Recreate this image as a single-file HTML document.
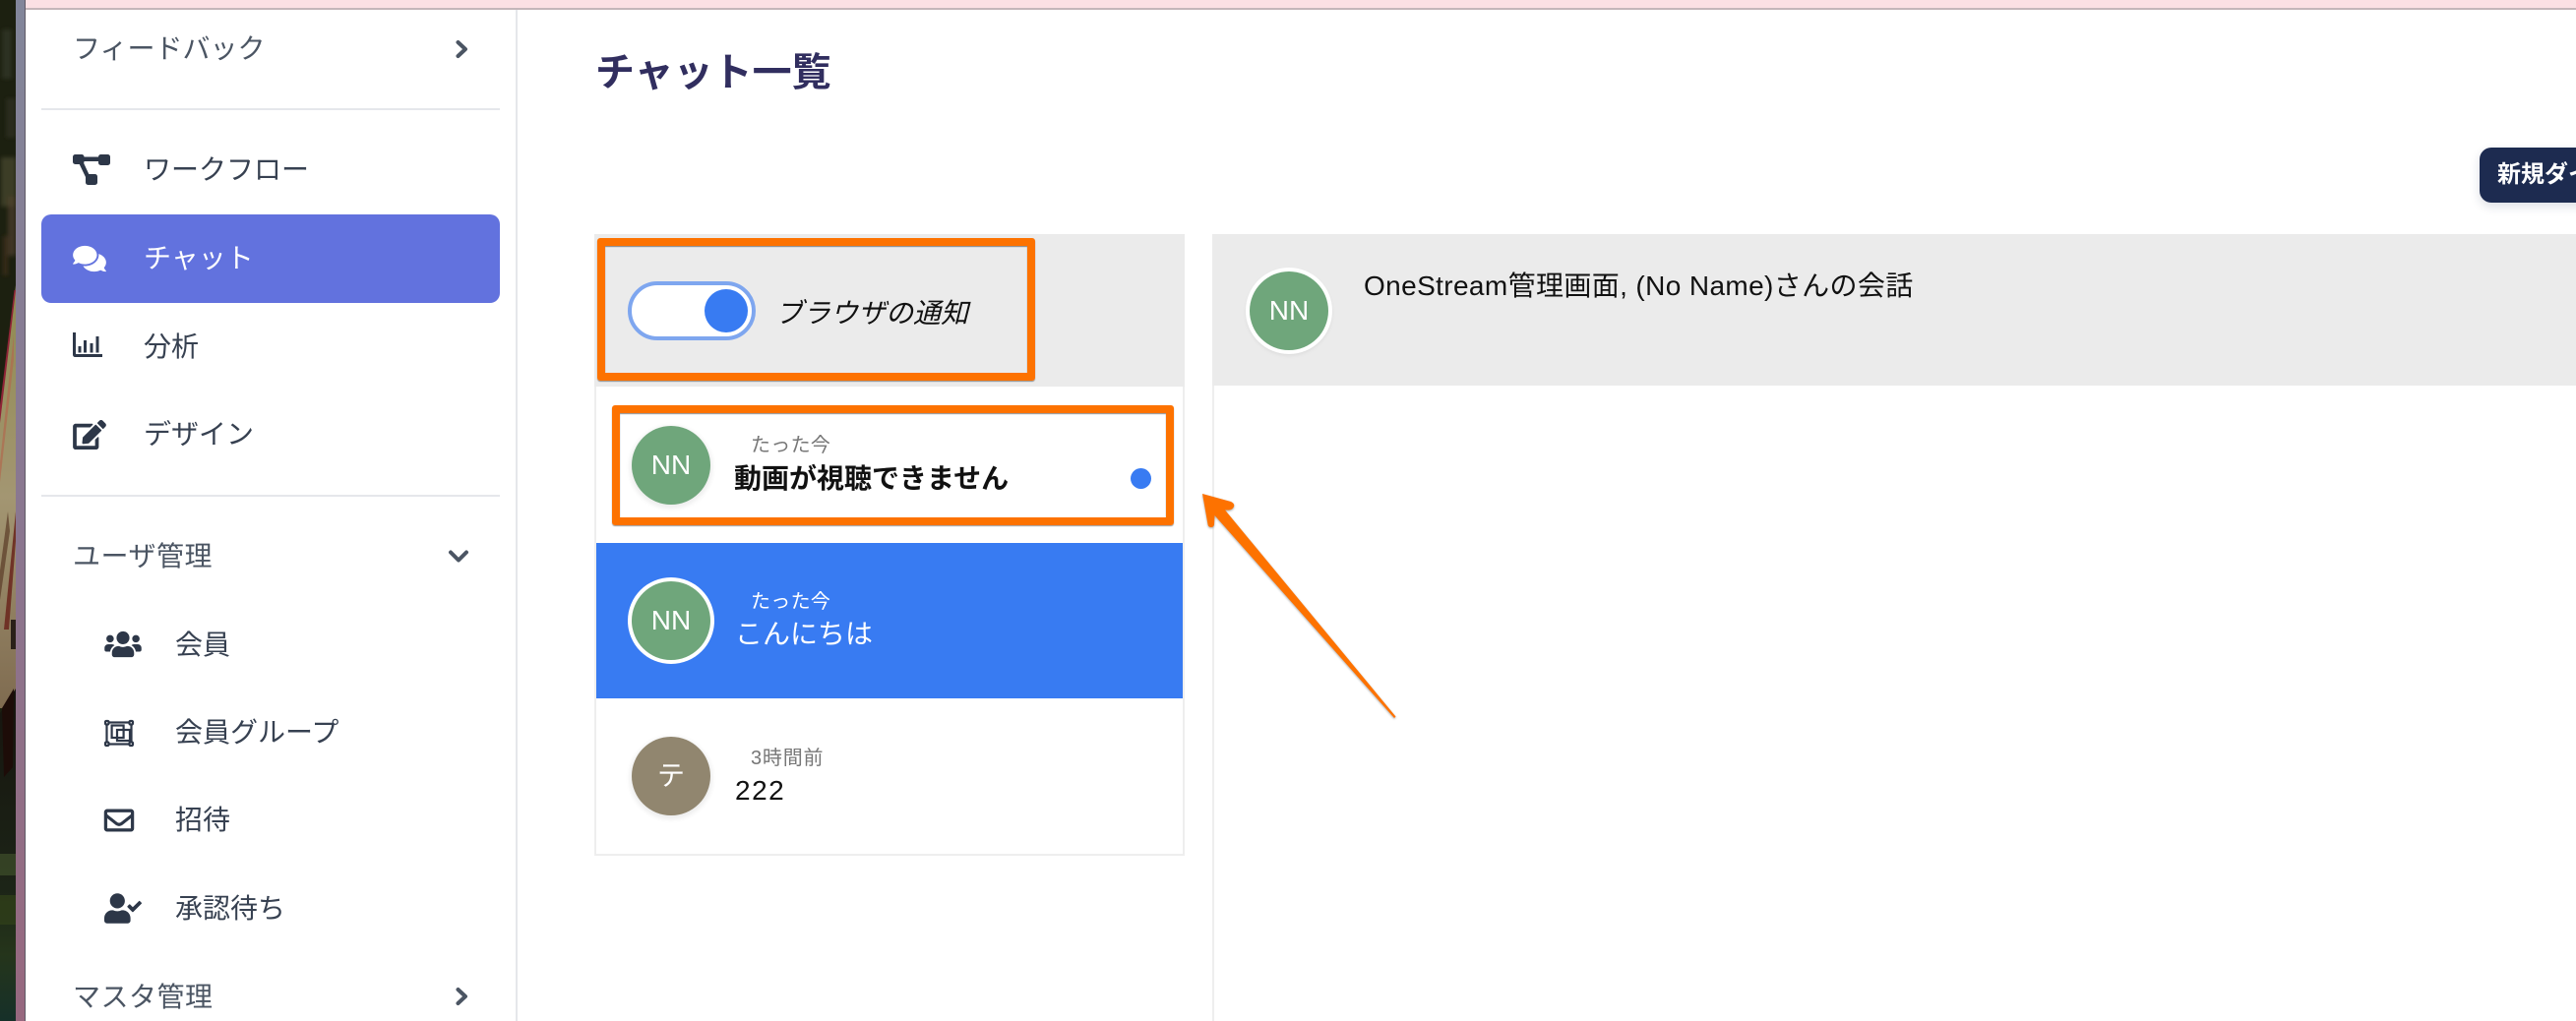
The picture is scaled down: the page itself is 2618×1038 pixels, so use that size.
<!DOCTYPE html>
<html lang="ja">
<head>
<meta charset="utf-8">
<title>チャット一覧</title>
<style>
html,body{margin:0;padding:0;width:2618px;height:1038px;overflow:hidden;background:#fff}
body{position:relative;font-family:"Liberation Sans","Noto Sans CJK JP",sans-serif;color:#111}
.a{position:absolute}
.t{position:absolute;white-space:nowrap;line-height:42px;height:42px;font-size:28px}
.g{color:#4b5563}
.i{color:#374151}
svg.ic{position:absolute;fill:#2d3748;overflow:visible}
svg.ch{position:absolute;fill:none;stroke:#4b5563;stroke-width:4;stroke-linecap:round;stroke-linejoin:round;overflow:visible}
.av{position:absolute;width:80px;height:80px;border-radius:50%;color:#fff;font-size:28px;line-height:80px;text-align:center}
.box{position:absolute;box-sizing:border-box;border:8px solid #fd7200;border-radius:3px;box-shadow:0 1px 1px rgba(0,0,0,.4),inset 0 1px 1px rgba(0,0,0,.45)}
</style>
</head>
<body>
<!-- left desktop strip -->
<svg class="a" style="left:0;top:0" width="26" height="1038" viewBox="0 0 26 1038">
<defs>
<linearGradient id="pg" x1="0" y1="0" x2="0" y2="1"><stop offset="0" stop-color="#82869a"/><stop offset=".5" stop-color="#8a7790"/><stop offset="1" stop-color="#97687f"/></linearGradient>
<linearGradient id="tan" x1="0" y1="0" x2="0" y2="1"><stop offset="0" stop-color="#8f8a50"/><stop offset=".5" stop-color="#a39672"/><stop offset="1" stop-color="#7f6b50"/></linearGradient>
<linearGradient id="dk" x1="0" y1="0" x2="0" y2="1"><stop offset="0" stop-color="#16140e"/><stop offset=".6" stop-color="#1c2417"/><stop offset=".8" stop-color="#25351b"/><stop offset="1" stop-color="#163029"/></linearGradient>
<filter id="bl"><feGaussianBlur stdDeviation="2"/></filter>
</defs>
<rect width="16" height="1038" fill="#1c2010"/>
<g filter="url(#bl)">
<rect y="30" x="2" width="10" height="50" fill="#34382a" opacity=".7"/>
<rect y="100" x="6" width="10" height="40" fill="#33332a" opacity=".6"/>
<rect y="160" x="1" width="15" height="50" fill="#45452c" opacity=".8"/>
<rect y="200" x="8" width="8" height="60" fill="#50402c" opacity=".7"/>
<rect y="240" x="3" width="5" height="40" fill="#443020" opacity=".7"/>
</g>
<polygon points="16,290 16,720 0,720 0,425" fill="url(#tan)"/>
<polygon points="16,295 14.500,295 0,412 0,430" fill="#8f2336"/>
<polygon points="14,340 0,470 0,490 14,365" fill="#b0694e" opacity=".7"/>
<polygon points="16,520 4,640 9,640 16,550" fill="#6c2a20" opacity=".9"/>
<polygon points="8,520 0,580 0,610 10,540" fill="#5a3a26" opacity=".7"/>
<rect y="630" x="11" width="5" height="30" fill="#2a2018"/>
<polygon points="0,725 16,700 16,1038 0,1038" fill="url(#dk)"/>
<polygon points="2,720 14,700 13,780 4,790" fill="#1d0c08"/>
<rect y="868" x="0" width="16" height="22" fill="#3b4a28" opacity=".8"/>
<rect y="910" x="0" width="16" height="30" fill="#303f19" opacity=".8"/>
<rect x="16" width="10" height="1038" fill="url(#pg)"/>
<rect x="25" width="1" height="1038" fill="#5f5a66"/>
</svg>

<!-- top pink bar -->
<div class="a" style="left:26px;top:0;width:2592px;height:8px;background:#fbe0e4"></div>
<div class="a" style="left:26px;top:8px;width:2592px;height:2px;background:#c4b6ba"></div>

<!-- sidebar -->
<div class="a" style="left:524px;top:10px;width:2px;height:1028px;background:#e5e7eb"></div>
<div class="a" style="left:42px;top:110px;width:466px;height:2px;background:#e5e7eb"></div>
<div class="a" style="left:42px;top:503px;width:466px;height:2px;background:#e5e7eb"></div>
<div class="a" style="left:42px;top:218px;width:466px;height:90px;background:#6272de;border-radius:10px"></div>

<span class="t g" style="left:74px;top:29px">フィードバック</span>
<svg class="ch" style="left:463px;top:41px" width="12" height="18" viewBox="0 0 12 18"><path d="M2.500 2L10 9L2.500 16"/></svg>

<svg class="ic" style="left:74px;top:157px" width="38" height="31" viewBox="0 0 38 31">
<rect x="0" y="0" width="11.500" height="10" rx="2.500"/><rect x="26" y="0" width="12" height="11" rx="2.500"/><rect x="13" y="20" width="12" height="11" rx="2.500"/>
<path d="M10 2.500H27V7H10zM6 8.500L10 6.500L17 21.500L13 23z"/>
</svg>
<span class="t i" style="left:146px;top:152px">ワークフロー</span>

<svg class="ic" style="left:74px;top:248px;fill:#fff" width="34" height="30" viewBox="0 0 576 512"><path d="M416 192c0-88.400-93.100-160-208-160S0 103.600 0 192c0 34.300 14.100 65.900 38 92-13.400 30.200-35.500 54.200-35.800 54.500-2.200 2.300-2.800 5.700-1.500 8.700S4.800 352 8 352c36.600 0 66.900-12.300 88.700-25 32.200 15.700 70.300 25 111.300 25 114.900 0 208-71.600 208-160zm122 220c23.900-26 38-57.700 38-92 0-66.900-53.500-124.200-129.300-148.100.9 6.600 1.300 13.300 1.300 20.100 0 105.900-107.700 192-240 192-10.800 0-21.300-.8-31.700-1.900C207.800 439.600 281.800 480 368 480c41 0 79.100-9.200 111.300-25 21.800 12.700 52.100 25 88.700 25 3.200 0 6.100-1.900 7.300-4.800 1.300-2.900.7-6.300-1.500-8.700-.3-.3-22.400-24.200-35.800-54.500z"/></svg>
<span class="t" style="left:146px;top:242px;color:#fff">チャット</span>

<svg class="ic" style="left:74px;top:338px" width="30" height="26" viewBox="0 0 30 26">
<path d="M0 0H3V22H30V25H2.500C1 25 0 24 0 22.500z"/>
<rect x="5.500" y="14" width="3" height="6.500"/><rect x="11" y="8" width="3" height="12.500"/><rect x="17.500" y="11" width="3" height="9.500"/><rect x="23.500" y="4" width="3" height="16.500"/>
</svg>
<span class="t i" style="left:146px;top:332px">分析</span>

<svg class="ic" style="left:74px;top:427px" width="34" height="30" viewBox="0 0 576 512"><path d="M402.600 83.200l90.200 90.200c3.800 3.800 3.800 10 0 13.800L274.400 405.600l-92.800 10.300c-12.400 1.400-22.900-9.100-21.500-21.500l10.300-92.800L388.800 83.200c3.800-3.800 10-3.800 13.800 0zm162-22.900l-48.800-48.800c-15.200-15.200-39.900-15.200-55.200 0l-35.400 35.400c-3.800 3.800-3.800 10 0 13.800l90.200 90.200c3.800 3.800 10 3.800 13.800 0l35.400-35.400c15.200-15.300 15.200-40 0-55.200zM384 346.200V448H64V128h229.800c3.200 0 6.200-1.300 8.500-3.500l40-40c7.600-7.600 2.200-20.500-8.500-20.500H48C21.500 64 0 85.500 0 112v352c0 26.500 21.500 48 48 48h352c26.500 0 48-21.500 48-48V306.200c0-10.700-12.900-16-20.500-8.500l-40 40c-2.200 2.300-3.500 5.300-3.500 8.500z"/></svg>
<span class="t i" style="left:146px;top:421px">デザイン</span>

<span class="t g" style="left:74px;top:545px;letter-spacing:.5px">ユーザ管理</span>
<svg class="ch" style="left:456px;top:559px" width="20" height="13" viewBox="0 0 20 13"><path d="M2 2.500L10 10.500L18 2.500"/></svg>

<svg class="ic" style="left:106px;top:640px" width="38" height="30" viewBox="0 0 640 512"><path d="M96 224c35.300 0 64-28.700 64-64s-28.700-64-64-64-64 28.700-64 64 28.700 64 64 64zm448 0c35.300 0 64-28.700 64-64s-28.700-64-64-64-64 28.700-64 64 28.700 64 64 64zm32 32h-64c-17.600 0-33.500 7.100-45.100 18.600 40.300 22.100 68.900 62 75.100 109.400h66c17.700 0 32-14.300 32-32v-32c0-35.300-28.700-64-64-64zm-256 0c61.900 0 112-50.100 112-112S381.900 32 320 32 208 82.100 208 144s50.100 112 112 112zm76.800 32h-8.300c-20.800 10-43.900 16-68.500 16s-47.600-6-68.500-16h-8.300C179.600 288 128 339.600 128 403.200V432c0 26.500 21.500 48 48 48h288c26.500 0 48-21.500 48-48v-28.800c0-63.600-51.600-115.200-115.200-115.200zm-223.700-13.400C161.500 263.100 145.600 256 128 256H64c-35.300 0-64 28.700-64 64v32c0 17.700 14.300 32 32 32h65.900c6.300-47.400 34.900-87.300 75.200-109.400z"/></svg>
<span class="t i" style="left:178px;top:635px">会員</span>

<svg class="ic" style="left:106px;top:732px;fill:none;stroke:#2d3748;stroke-width:2.200" width="30" height="27" viewBox="0 0 30 27">
<rect x="2.500" y="2.500" width="25" height="22"/>
<rect x="7.600" y="5.500" width="12" height="12.500"/><rect x="13" y="10" width="13" height="11"/>
<g fill="#fff"><rect x="1" y="1" width="3.500" height="3.500" rx="1"/><rect x="25.500" y="1" width="3.500" height="3.500" rx="1"/><rect x="1" y="22.500" width="3.500" height="3.500" rx="1"/><rect x="25.500" y="22.500" width="3.500" height="3.500" rx="1"/></g>
</svg>
<span class="t i" style="left:178px;top:724px">会員グループ</span>

<svg class="ic" style="left:106px;top:819px" width="30" height="30" viewBox="0 0 512 512"><path stroke="#2d3748" stroke-width="8" d="M464 64H48C21.490 64 0 85.490 0 112v288c0 26.510 21.490 48 48 48h416c26.510 0 48-21.490 48-48V112c0-26.510-21.490-48-48-48zm0 48v40.805c-22.422 18.259-58.168 46.651-134.587 106.490-16.841 13.247-50.201 45.072-73.413 44.701-23.208.375-56.579-31.459-73.413-44.701C106.180 199.465 70.425 171.067 48 152.805V112h416zM48 400V214.398c22.914 18.251 55.409 43.862 104.938 82.646 21.857 17.205 60.134 55.186 103.062 54.955 42.717.231 80.509-37.199 103.053-54.947 49.528-38.783 82.032-64.401 104.947-82.653V400H48z"/></svg>
<span class="t i" style="left:178px;top:813px">招待</span>

<svg class="ic" style="left:106px;top:908px" width="38" height="31" viewBox="0 0 640 512"><path d="M224 256c70.700 0 128-57.300 128-128S294.700 0 224 0 96 57.300 96 128s57.300 128 128 128zm89.600 32h-16.700c-22.200 10.200-46.900 16-72.900 16s-50.600-5.800-72.900-16h-16.700C60.200 288 0 348.200 0 422.400V464c0 26.500 21.500 48 48 48h352c26.500 0 48-21.500 48-48v-41.600c0-74.200-60.200-134.400-134.400-134.400zm323-128.400l-27.800-28.100c-4.600-4.700-12.100-4.700-16.800-.1l-104.800 104-45.500-45.800c-4.600-4.700-12.100-4.700-16.800-.1l-28.100 27.900c-4.700 4.600-4.700 12.100-.1 16.800l81.700 82.300c4.600 4.700 12.100 4.700 16.800.1l141.300-140.200c4.600-4.700 4.700-12.200.1-16.800z"/></svg>
<span class="t i" style="left:178px;top:903px">承認待ち</span>

<span class="t g" style="left:74px;top:993px;letter-spacing:.5px">マスタ管理</span>
<svg class="ch" style="left:463px;top:1004px" width="12" height="18" viewBox="0 0 12 18"><path d="M2.500 2L10 9L2.500 16"/></svg>

<!-- title -->
<span class="t" style="left:605px;top:54px;font-size:40px;font-weight:700;color:#312e5f;line-height:40px">チャット一覧</span>

<!-- button -->
<div class="a" style="left:2520px;top:150px;width:120px;height:56px;background:#1d2b50;border-radius:12px 0 0 12px;box-shadow:0 4px 10px rgba(30,40,80,.15);overflow:hidden">
<span class="t" style="left:18px;top:7px;font-size:24px;font-weight:700;color:#fff">新規ダイレクトメッセージ</span>
</div>

<!-- list panel -->
<div class="a" style="left:604px;top:238px;width:600px;height:155px;background:#ebebeb"></div>
<div class="a" style="left:604px;top:393px;width:2px;height:477px;background:#eee"></div>
<div class="a" style="left:1202px;top:393px;width:2px;height:477px;background:#eee"></div>
<div class="a" style="left:604px;top:868px;width:600px;height:2px;background:#eee"></div>

<div class="a" style="left:638px;top:286px;width:130px;height:60px;box-sizing:border-box;border:4px solid #7ea6ef;border-radius:30px;background:#fff"></div>
<div class="a" style="left:716px;top:294px;width:44px;height:44px;border-radius:50%;background:#387bf2"></div>
<span class="t" style="left:788px;top:298px;font-style:italic;color:#111">ブラウザの通知</span>

<!-- row 1 -->
<div class="av" style="left:642px;top:433px;background:#6fa67b;box-shadow:0 2px 5px 2px rgba(0,0,0,.07)">NN</div>
<span class="t" style="left:763px;top:432px;font-size:20px;color:#777;letter-spacing:.3px">たった今</span>
<span class="t" style="left:746px;top:466px;font-weight:700;color:#111">動画が視聴できません</span>
<div class="a" style="left:1149px;top:476px;width:21px;height:21px;border-radius:50%;background:#387bf2"></div>

<!-- row 2 -->
<div class="a" style="left:606px;top:552px;width:596px;height:158px;background:#387bf2"></div>
<div class="av" style="left:642px;top:591px;background:#6fa67b;box-shadow:0 0 0 4px #fff">NN</div>
<span class="t" style="left:763px;top:591px;font-size:20px;color:#fff;letter-spacing:.3px">たった今</span>
<span class="t" style="left:747px;top:624px;color:#fff">こんにちは</span>

<!-- row 3 -->
<div class="av" style="left:642px;top:749px;background:#91866f;box-shadow:0 2px 5px 2px rgba(0,0,0,.07)">テ</div>
<span class="t" style="left:763px;top:750px;font-size:20px;color:#777;letter-spacing:.8px">3時間前</span>
<span class="t" style="left:747px;top:783px;color:#111;letter-spacing:1.500px">222</span>

<!-- right panel -->
<div class="a" style="left:1232px;top:238px;width:1386px;height:154px;background:#ebebeb"></div>
<div class="a" style="left:1232px;top:392px;width:2px;height:646px;background:#eee"></div>
<div class="av" style="left:1270px;top:276px;background:#6fa67b;box-shadow:0 0 0 4px #fff,0 2px 5px 3px rgba(0,0,0,.08)">NN</div>
<span class="t" style="left:1386px;top:270px;color:#111;letter-spacing:.38px">OneStream管理画面, (No Name)さんの会話</span>

<!-- annotations -->
<div class="box" style="left:607px;top:242px;width:445px;height:145px"></div>
<div class="box" style="left:622px;top:412px;width:571px;height:122px"></div>
<svg class="a" style="left:0;top:0;filter:drop-shadow(0 1px 1px rgba(0,0,0,.35))" width="2618" height="1038" viewBox="0 0 2618 1038">
<path d="M1222 502L1251 510Q1255 512 1254 515Q1253 518 1249 518.500L1245 518.500L1418.500 728.500L1417 730L1234.500 524L1234 533Q1233.500 536 1231 536Q1228 536 1227.500 533Z" fill="#fd7200"/>
</svg>
</body>
</html>
